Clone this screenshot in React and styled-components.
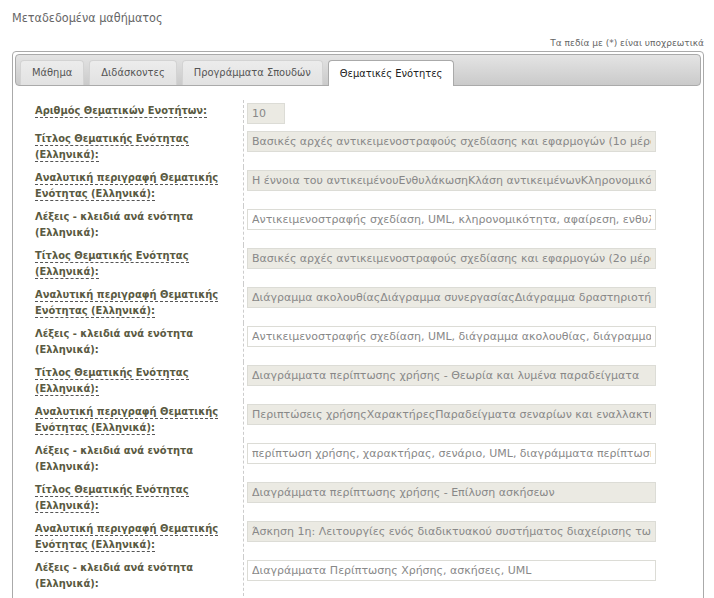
import React from 'react';
import styled, { createGlobalStyle } from 'styled-components';

const GlobalStyle = createGlobalStyle`
  html, body {
    margin: 0;
    padding: 0;
    background: #fff;
  }
  body {
    font-family: "DejaVu Sans", Verdana, sans-serif;
    overflow: hidden;
  }
`;

const narrow = `
  font-family: "DejaVu Sans Condensed", "DejaVu Sans", Verdana, sans-serif;
  font-stretch: condensed;
`;

const Page = styled.div`
  padding: 9px 10px 0 12px;
`;

const Title = styled.h2`
  margin: 0;
  ${narrow}
  font-size: 12.5px;
  font-weight: normal;
  color: #666;
  line-height: 18px;
`;

const Required = styled.div`
  margin-top: 10px;
  text-align: right;
  font-size: 9px;
  line-height: 12px;
  color: #666;
`;

const Panel = styled.div`
  margin-top: 2px;
  border: 1px solid #aaa;
  border-radius: 4px;
  padding: 2px;
  height: 600px;
`;

const TabBar = styled.ul`
  display: flex;
  align-items: flex-end;
  gap: 5px;
  margin: 0;
  padding: 5px 3px 0 4px;
  list-style: none;
  height: 25px;
  border: 1px solid #aaa;
  border-radius: 4px;
  background: linear-gradient(#e4e4e4, #cacaca);
`;

const Tab = styled.li`
  height: ${p => (p.$active ? '26px' : '25px')};
  margin-bottom: ${p => (p.$active ? '-1px' : '0')};
  padding: 0 11px 1px;
  display: flex;
  align-items: center;
  box-sizing: border-box;
  border: 1px solid ${p => (p.$active ? '#aaa' : '#d3d3d3')};
  border-bottom: none;
  border-radius: 4px 4px 0 0;
  background: ${p => (p.$active ? '#fff' : 'linear-gradient(#ececec, #e2e2e2)')};
  color: ${p => (p.$active ? '#212121' : '#555')};
  ${narrow}
  font-size: 11px;
  white-space: nowrap;
`;

const Form = styled.div`
  padding: 14px 0 0 20px;
`;

const Row = styled.div`
  display: grid;
  grid-template-columns: 208px 1fr;
`;

const LabelCell = styled.div`
  padding: 3px 0 4px;
  ${narrow}
  font-size: 11px;
  font-weight: bold;
  line-height: 16px;
  color: #5a5a42;
  white-space: pre-line;
`;

const Tip = styled.span`
  border-bottom: 1px dashed #555;
`;

const FieldCell = styled.div`
  border-left: 1px dashed #ccc;
  padding: 3px 0 4px 3px;
`;

const Field = styled.input`
  display: block;
  box-sizing: border-box;
  width: ${p => (p.$short ? '38px' : '409px')};
  height: 21px;
  margin: 0;
  padding: 0 4px;
  border: 1px solid #dcdcd6;
  background: ${p => (p.$locked ? '#ebeae3' : '#fff')};
  color: #888;
  font-family: "DejaVu Sans", Verdana, sans-serif;
  font-size: 11px;
  outline: none;
`;

const tabs = ['Μάθημα', 'Διδάσκοντες', 'Προγράμματα Σπουδών', 'Θεματικές Ενότητες'];

const units = [
  [
    'Βασικές αρχές αντικειμενοστραφούς σχεδίασης και εφαρμογών (1ο μέρος)',
    'Η έννοια του αντικειμένουΕνθυλάκωσηΚλάση αντικειμένωνΚληρονομικότητα',
    'Αντικειμενοστραφής σχεδίαση, UML, κληρονομικότητα, αφαίρεση, ενθυλάκωση',
  ],
  [
    'Βασικές αρχές αντικειμενοστραφούς σχεδίασης και εφαρμογών (2ο μέρος)',
    'Διάγραμμα ακολουθίαςΔιάγραμμα συνεργασίαςΔιάγραμμα δραστηριοτήτων',
    'Αντικειμενοστραφής σχεδίαση, UML, διάγραμμα ακολουθίας, διάγραμμα συνεργασίας',
  ],
  [
    'Διαγράμματα περίπτωσης χρήσης - Θεωρία και λυμένα παραδείγματα',
    'Περιπτώσεις χρήσηςΧαρακτήρεςΠαραδείγματα σεναρίων και εναλλακτικών ροών',
    'περίπτωση χρήσης, χαρακτήρας, σενάριο, UML, διαγράμματα περίπτωσης χρήσης',
  ],
  [
    'Διαγράμματα περίπτωσης χρήσης - Επίλυση ασκήσεων',
    'Άσκηση 1η: Λειτουργίες ενός διαδικτυακού συστήματος διαχείρισης των παραγγελιών',
    'Διαγράμματα Περίπτωσης Χρήσης, ασκήσεις, UML',
  ],
];

const rows = [{ label: 'Αριθμός Θεματικών Ενοτήτων:', value: '10', tip: true, locked: true, short: true }];
units.forEach(u => {
  rows.push({ label: 'Τίτλος Θεματικής Ενότητας\n(Ελληνικά):', value: u[0], tip: true, locked: true });
  rows.push({ label: 'Αναλυτική περιγραφή Θεματικής\nΕνότητας (Ελληνικά):', value: u[1], tip: true, locked: true });
  rows.push({ label: 'Λέξεις - κλειδιά ανά ενότητα\n(Ελληνικά):', value: u[2] });
});

export default function App() {
  return (
    <Page>
      <GlobalStyle />
      <Title>Μεταδεδομένα μαθήματος</Title>
      <Required>Τα πεδία με (*) είναι υποχρεωτικά</Required>
      <Panel>
        <TabBar>
          {tabs.map((t, i) => (
            <Tab key={t} $active={i === tabs.length - 1}>
              {t}
            </Tab>
          ))}
        </TabBar>
        <Form>
          {rows.map((r, i) => (
            <Row key={i}>
              <LabelCell>{r.tip ? <Tip>{r.label}</Tip> : r.label}</LabelCell>
              <FieldCell>
                <Field readOnly value={r.value} $locked={r.locked} $short={r.short} />
              </FieldCell>
            </Row>
          ))}
        </Form>
      </Panel>
    </Page>
  );
}
